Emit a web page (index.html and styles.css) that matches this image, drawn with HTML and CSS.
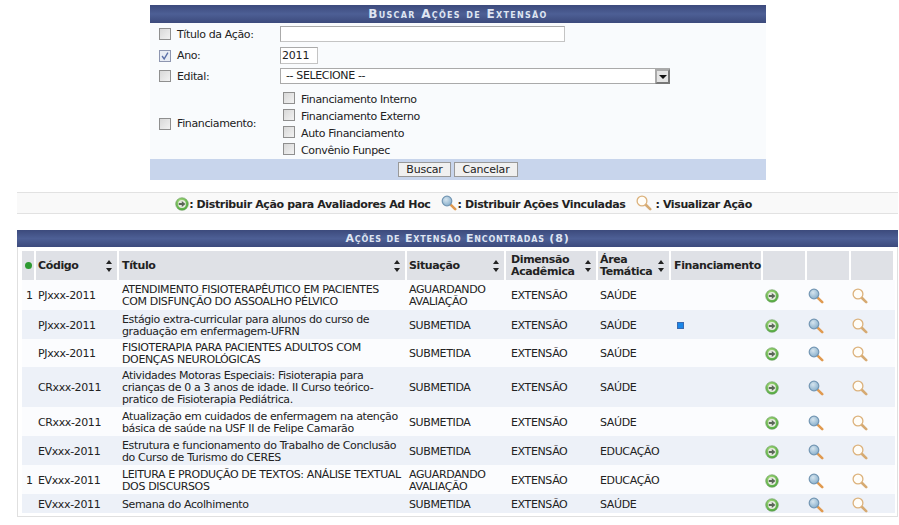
FILE: index.html
```html
<!DOCTYPE html>
<html lang="pt">
<head>
<meta charset="utf-8">
<title>Buscar Ações de Extensão</title>
<link rel="stylesheet" href="styles.css">
</head>
<body>
<svg class="defs" width="0" height="0" aria-hidden="true">
  <defs>
    <radialGradient id="gg" cx="40%" cy="30%" r="75%"><stop offset="0" stop-color="#a9dc7f"/><stop offset="1" stop-color="#4aa63a"/></radialGradient>
    <radialGradient id="lens" cx="40%" cy="35%" r="70%"><stop offset="0" stop-color="#d5e4ee"/><stop offset="1" stop-color="#86aecb"/></radialGradient>
    <symbol id="go" viewBox="0 0 14 14">
      <circle cx="7" cy="7" r="6.3" fill="url(#gg)" stroke="#6b9a5f" stroke-width=".6"/>
      <circle cx="7" cy="7" r="3.900" fill="#e6e9e0"/>
      <path d="M3.800 5.900h3V3.900L10.400 7 6.800 10.100V8.100h-3z" fill="#5a6658"/>
    </symbol>
    <symbol id="lupa" viewBox="0 0 16 16">
      <path d="M9.800 9.800L14.200 14.200" stroke="#e09a50" stroke-width="2.600" stroke-linecap="round"/>
      <circle cx="6" cy="6" r="4.800" fill="url(#lens)" stroke="#7396b3" stroke-width="1.200"/>
    </symbol>
    <symbol id="lupa2" viewBox="0 0 16 16">
      <path d="M10 10L14.200 14.200" stroke="#d6aa72" stroke-width="2.600" stroke-linecap="round"/>
      <circle cx="6" cy="6" r="4.900" fill="#fffdf8" stroke="#dcb27c" stroke-width="1.300"/>
    </symbol>
  </defs>
</svg>

<form class="search">
  <h2 class="bar search-title">Buscar Ações de Extensão</h2>
  <div class="search-body">
    <div class="field f-titulo"><span class="check"></span><label>Título da Ação:</label><input class="text wide" type="text"></div>
    <div class="field f-ano"><span class="check on"><svg viewBox="0 0 12 12"><path d="M2.500 6l2.500 3.500L9.500 2" fill="none" stroke="#5a6fa8" stroke-width="1.600"/></svg></span><label>Ano:</label><input class="text small" type="text" value="2011"></div>
    <div class="field f-edital"><span class="check"></span><label>Edital:</label>
      <div class="select"><span>-- SELECIONE --</span><i class="arrow"></i></div></div>
    <div class="field f-fin"><span class="check"></span><label>Financiamento:</label>
      <ul class="options">
        <li><span class="check"></span>Financiamento Interno</li>
        <li><span class="check"></span>Financiamento Externo</li>
        <li><span class="check"></span>Auto Financiamento</li>
        <li><span class="check"></span>Convênio Funpec</li>
      </ul>
    </div>
  </div>
  <div class="search-foot"><button type="button" class="btn b1">Buscar</button><button type="button" class="btn b2">Cancelar</button></div>
</form>

<div class="legend">
  <svg class="ic-go"><use href="#go"/></svg><span>: Distribuir Ação para Avaliadores Ad Hoc</span>
  <svg class="ic-lupa l1"><use href="#lupa"/></svg><span>: Distribuir Ações Vinculadas</span>
  <svg class="ic-lupa l2"><use href="#lupa2"/></svg><span>: Visualizar Ação</span>
</div>

<section class="results">
  <h2 class="bar results-title">Ações de Extensão Encontradas (8)</h2>
  <table>
    <colgroup>
      <col class="c0"><col class="c1"><col class="c2"><col class="c3"><col class="c4"><col class="c5"><col class="c6"><col class="c7"><col class="c7"><col class="c7">
    </colgroup>
    <thead>
      <tr>
        <th class="dot-cell"><i class="dot"></i></th>
        <th><div class="sort">Código<i class="updown"></i></div></th>
        <th><div class="sort">Título<i class="updown"></i></div></th>
        <th><div class="sort">Situação<i class="updown"></i></div></th>
        <th><div class="sort">Dimensão Acadêmica<i class="updown"></i></div></th>
        <th><div class="sort">Área Temática<i class="updown"></i></div></th>
        <th class="fin">Financiamento</th>
        <th></th><th></th><th></th>
      </tr>
    </thead>
    <tbody>
      <tr class="r1 h30"><td class="n">1</td><td>PJxxx-2011</td><td>ATENDIMENTO FISIOTERAPÊUTICO EM PACIENTES COM DISFUNÇÃO DO ASSOALHO PÉLVICO</td><td>AGUARDANDO AVALIAÇÃO</td><td>EXTENSÃO</td><td>SAÚDE</td><td></td><td><svg class="ic-go"><use href="#go"/></svg></td><td><svg class="ic-lupa"><use href="#lupa"/></svg></td><td><svg class="ic-lupa"><use href="#lupa2"/></svg></td></tr>
      <tr class="r2 h29"><td class="n"></td><td>PJxxx-2011</td><td>Estágio extra-curricular para alunos do curso de graduação em enfermagem-UFRN</td><td>SUBMETIDA</td><td>EXTENSÃO</td><td>SAÚDE</td><td class="fin-mark"><i class="square"></i></td><td><svg class="ic-go"><use href="#go"/></svg></td><td><svg class="ic-lupa"><use href="#lupa"/></svg></td><td><svg class="ic-lupa"><use href="#lupa2"/></svg></td></tr>
      <tr class="r1 h28"><td class="n"></td><td>PJxxx-2011</td><td>FISIOTERAPIA PARA PACIENTES ADULTOS COM DOENÇAS NEUROLÓGICAS</td><td>SUBMETIDA</td><td>EXTENSÃO</td><td>SAÚDE</td><td></td><td><svg class="ic-go"><use href="#go"/></svg></td><td><svg class="ic-lupa"><use href="#lupa"/></svg></td><td><svg class="ic-lupa"><use href="#lupa2"/></svg></td></tr>
      <tr class="r2 h40"><td class="n"></td><td>CRxxx-2011</td><td>Atividades Motoras Especiais: Fisioterapia para crianças de 0 a 3 anos de idade. II Curso teórico-pratico de Fisioterapia Pediátrica.</td><td>SUBMETIDA</td><td>EXTENSÃO</td><td>SAÚDE</td><td></td><td><svg class="ic-go"><use href="#go"/></svg></td><td><svg class="ic-lupa"><use href="#lupa"/></svg></td><td><svg class="ic-lupa"><use href="#lupa2"/></svg></td></tr>
      <tr class="r1 h29"><td class="n"></td><td>CRxxx-2011</td><td>Atualização em cuidados de enfermagem na atenção básica de saúde na USF II de Felipe Camarão</td><td>SUBMETIDA</td><td>EXTENSÃO</td><td>SAÚDE</td><td></td><td><svg class="ic-go"><use href="#go"/></svg></td><td><svg class="ic-lupa"><use href="#lupa"/></svg></td><td><svg class="ic-lupa"><use href="#lupa2"/></svg></td></tr>
      <tr class="r2 h29"><td class="n"></td><td>EVxxx-2011</td><td>Estrutura e funcionamento do Trabalho de Conclusão do Curso de Turismo do CERES</td><td>SUBMETIDA</td><td>EXTENSÃO</td><td>EDUCAÇÃO</td><td></td><td><svg class="ic-go"><use href="#go"/></svg></td><td><svg class="ic-lupa"><use href="#lupa"/></svg></td><td><svg class="ic-lupa"><use href="#lupa2"/></svg></td></tr>
      <tr class="r1 h29"><td class="n">1</td><td>EVxxx-2011</td><td>LEITURA E PRODUÇÃO DE TEXTOS: ANÁLISE TEXTUAL DOS DISCURSOS</td><td>AGUARDANDO AVALIAÇÃO</td><td>EXTENSÃO</td><td>EDUCAÇÃO</td><td></td><td><svg class="ic-go"><use href="#go"/></svg></td><td><svg class="ic-lupa"><use href="#lupa"/></svg></td><td><svg class="ic-lupa"><use href="#lupa2"/></svg></td></tr>
      <tr class="r2 h19"><td class="n"></td><td>EVxxx-2011</td><td>Semana do Acolhimento</td><td>SUBMETIDA</td><td>EXTENSÃO</td><td>SAÚDE</td><td></td><td><svg class="ic-go"><use href="#go"/></svg></td><td><svg class="ic-lupa"><use href="#lupa"/></svg></td><td><svg class="ic-lupa"><use href="#lupa2"/></svg></td></tr>
    </tbody>
  </table>
</section>
</body>
</html>
```
FILE: styles.css
```css
* { box-sizing: border-box; }
html, body { margin: 0; padding: 0; background: #fff; overflow: hidden; }
body { height: 525px; padding-top: 5px; font: 11px/12px "DejaVu Sans", Verdana, sans-serif; letter-spacing: -0.37px; color: #222; }
.defs { position: absolute; }

.bar {
  margin: 0; font-size: 11px; font-weight: bold; text-align: center; color: #dfe5f2;
  font-variant: small-caps;
  background: linear-gradient(#3c4a7c, #4d5f95 50%, #3c4a7c);
}

.search { width: 616px; margin-left: 150px; background: #f9fbfd; }
.search-title { height: 18px; line-height: 19px; font-size: 12px; letter-spacing: 1.3px; }
.search-body { height: 136px; padding-top: 3px; }
.field { display: flex; align-items: center; padding-left: 9px; }
.field label { width: 103px; margin-top: 1px; }
.field > .check { margin-right: 6px; }
.check { display: inline-block; flex: none; width: 12px; height: 12px; border: 1px solid #8f8f8f; background: linear-gradient(135deg, #d8d8d8, #f2f2f2); }
.check.on { background: #e8ecf4; border-color: #8e96b0; }
.check svg { display: block; width: 10px; height: 10px; }
.f-titulo { height: 16px; margin-bottom: 5px; }
.f-ano { height: 17px; margin-bottom: 4px; }
.f-edital { height: 16px; margin-bottom: 6px; }
.f-fin { height: 70px; }
.f-fin > .check, .f-fin > label { margin-top: -3px; }
.text { height: 100%; padding: 0 1px; font: 11px "DejaVu Sans", Verdana, sans-serif; letter-spacing: -0.2px; color: #222; background: #fff; border: 1px solid #aaa; border-right-color: #c4c4c4; border-bottom-color: #c4c4c4; }
.wide { width: 285px; }
.small { width: 38px; }
.select { width: 390px; height: 100%; display: flex; justify-content: space-between; align-items: center; padding-left: 5px; background: #fff; border: 1px solid #aaa; }
.arrow { position: relative; display: block; width: 15px; height: 15px; margin-right: -1px; background: #e4e4e4; border: 2px solid #777; border-top-color: #aaa; border-left-color: #aaa; }
.arrow::after { content: ""; position: absolute; left: 2px; top: 4px; border: 4px solid transparent; border-top: 4px solid #111; border-bottom: 0; }
.options { list-style: none; margin: 0; padding: 0 0 0 3px; }
.options li { display: flex; align-items: center; height: 17px; color: #222; }
.options .check { margin: -3px 6px 0 0; }
.search-foot { height: 21px; padding-top: 3px; display: flex; justify-content: center; gap: 3px; background: #c8d5ec; }
.btn { height: 15px; padding: 0; font: 11px/12px "DejaVu Sans", Verdana, sans-serif; letter-spacing: -0.2px; color: #222; background: #f0f0f0; border: 1px solid #999; border-radius: 0; }
.b1 { width: 53px; }
.b2 { width: 64px; }

.legend {
  width: 881px; height: 22px; margin: 12px 0 0 17px; padding: 4px 0 0 12px;
  display: flex; align-items: center; justify-content: center;
  font-weight: bold; color: #222; background: #f9f9f9;
  border-top: 1px solid #e2e2e2; border-bottom: 1px solid #e2e2e2;
}
.ic-go { width: 14px; height: 14px; vertical-align: middle; }
.ic-lupa { width: 16px; height: 16px; vertical-align: middle; }
.l1 { margin: -5px 1px 0 10px; }
.l2 { margin: -5px 3px 0 11px; }
.legend .ic-go { margin-top: -3px; }

.results { width: 881px; margin: 16px 0 0 17px; height: 287px; border: 1px solid #e0e0e0; border-top: 0; }
.results-title { margin: 0 -1px; height: 17px; line-height: 18px; letter-spacing: 0.8px; }
table { width: 873px; margin: 4px 0 0 4px; border-collapse: separate; border-spacing: 0; table-layout: fixed; }
.c0 { width: 14px; } .c1 { width: 83px; } .c2 { width: 288px; } .c3 { width: 99px; } .c4 { width: 92px; } .c5 { width: 73px; } .c6 { width: 92px; } .c7 { width: 44px; }
th { height: 29px; padding: 0 3px; text-align: left; font-weight: bold; line-height: 12px; color: #222; background: #dfe1e6; border-right: 2px solid #fff; }
tbody td { padding: 2px 3px 0; line-height: 12px; color: #222; }
th:nth-child(2), td:nth-child(2), th:nth-child(4), td:nth-child(4), th:nth-child(6), td:nth-child(6) { padding-left: 2px; }
th:nth-child(5), td:nth-child(5) { padding-left: 5px; }
.sort { display: flex; align-items: center; justify-content: space-between; padding-right: 1px; }
.updown { flex: none; position: relative; width: 7px; height: 10px; }
.updown::before, .updown::after { content: ""; position: absolute; left: 0; border: 3.5px solid transparent; }
.updown::before { top: -1px; border-bottom: 4px solid #222; border-top: 0; }
.updown::after { bottom: -1px; border-top: 4px solid #222; border-bottom: 0; }
.dot-cell { padding: 0 3px; }
.dot { display: block; width: 7px; height: 7px; border-radius: 50%; background: #2e9a32; }
.fin { white-space: nowrap; }
.r1 td { background: #fbfcfe; }
.r2 td { background: #edf1f8; }
tbody td.n { padding: 2px 2px 0 4px; }
.h30 td { height: 30px; } .h29 td { height: 29px; } .h28 td { height: 28px; } .h40 td { height: 40px; } .h19 td { height: 19px; }
tbody td svg { display: block; }
tbody td:nth-child(8) { padding-left: 2px; }
tbody td:nth-child(9), tbody td:nth-child(10) { padding-left: 1px; }
tbody td.fin-mark { padding-left: 6px; }
.square { display: block; width: 7px; height: 7px; background: #1a86e8; border: 1px solid #3a6ab0; }
```
